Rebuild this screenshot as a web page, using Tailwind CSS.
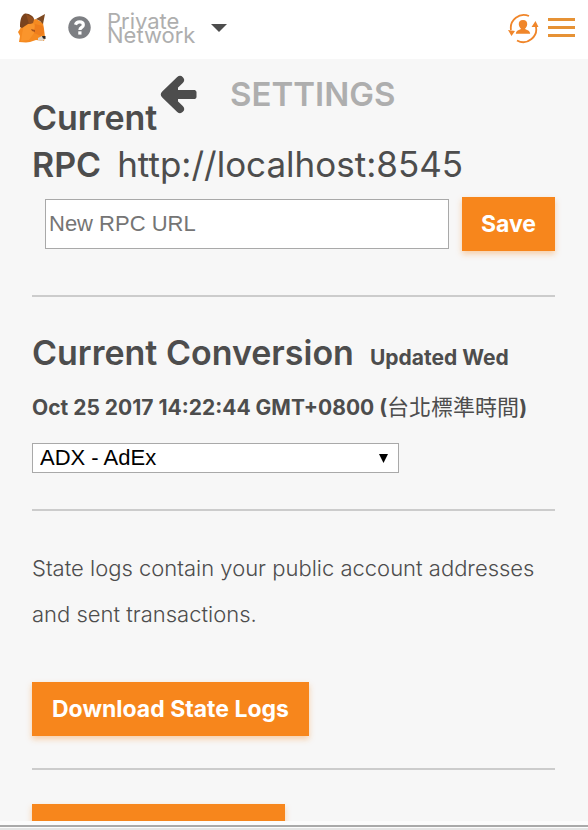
<!DOCTYPE html>
<html lang="en">
<head>
<meta charset="utf-8">
<meta name="viewport" content="width=device-width, initial-scale=1">
<title>Settings</title>
<script src="https://cdn.jsdelivr.net/npm/@tailwindcss/browser@4"></script>
</head>
<body class="flex h-screen flex-col overflow-hidden bg-[#f7f7f7] font-[Inter,'Noto_Sans_CJK_TC',sans-serif] text-[#4d4d4d]">
  <header class="flex h-[59px] shrink-0 items-center bg-white pr-[13px] pb-1 pl-4">
    <svg class="h-8 w-8" viewBox="0 0 32 32" role="img" aria-label="MetaMask">
      <path fill="#f58a20" d="M4 17 7 10l13-3 7 4 1 6 1 8-1 4-8-1-6 2-4 .5L3 30l1-6-2-4Z"/>
      <path fill="#fa952c" d="m8 13 9-2 3 4-2 6-5 7-8 1 1-7Z"/>
      <path fill="#ee7d1c" d="m19 12 8 2 1 7-3 3-7-3Z"/>
      <path fill="#7a431d" d="M4 15C4 9 5 3 9 1.500c4-.5 9 3 9 5.500l-1 4-5 1-6 4Z"/>
      <path fill="#94501f" d="m10 2 7 4v5l-4 1Z"/>
      <path fill="#7e4a22" d="m20 7 9-5-2 10-3-3Z"/>
      <path fill="#a9551c" d="m15 17 4 1v2l-3-1Z"/>
      <path fill="#ddd5cb" d="m22 26 4-2 3 2-2 3-5-1Z"/>
      <path fill="#292421" d="M26 24h3.500v3l-2.500-.5Z"/>
    </svg>
    <button type="button" aria-label="Help" class="ml-5">
      <svg class="size-[23px]" viewBox="0 0 24 24"><circle cx="12" cy="12" r="11.7" fill="#7d7f83"/><path fill="none" stroke="#fff" stroke-width="3.3" d="M7.8 9.2C8.5 7 10 6.1 12 6.1c2.300 0 4 1.200 4 3.200 0 2.600-3.600 2.500-3.600 5.200"/><path fill="#fff" d="M10.700 16h3.400v3.400h-3.400z"/></svg>
    </button>
    <button type="button" class="ml-4 flex items-center gap-4 text-left text-[#aeaeae]">
      <span class="text-[22px] leading-[14px]">Private<br>Network</span>
      <svg class="h-2 w-4" viewBox="0 0 16 8"><path fill="#4d4d4d" d="M0 0h16L8 8Z"/></svg>
    </button>
    <button type="button" aria-label="Switch account" class="ml-auto">
      <svg class="size-8" viewBox="0 0 32 32" fill="none" stroke="#f0862a" stroke-width="1.800">
        <path d="M22 4A13 13 0 0 0 4 18M10 28.500A13 13 0 0 0 28.500 13"/>
        <path fill="#f0862a" stroke="none" d="m1 18 7 1-3.500 5ZM24.500 15l4-6 3 6ZM16 8c3 0 4.500 2 4.200 4.500-.3 2-1.200 3.500-2.200 4.200 1 1.500 4.800 1 5.200 5.100H8.800c.4-4.100 4.200-3.600 5.200-5.100-1-.7-1.900-2.200-2.200-4.200C11.500 10 13 8 16 8Z"/>
      </svg>
    </button>
    <button type="button" aria-label="Menu" class="ml-[9px] flex w-[27px] flex-col gap-[5px]">
      <span class="h-[3px] w-full bg-[#e69235]"></span>
      <span class="h-[3px] w-full bg-[#e69235]"></span>
      <span class="h-[3px] w-full bg-[#e69235]"></span>
    </button>
  </header>

  <main class="min-h-0 flex-1 overflow-hidden px-8 pt-3">
    <div class="pr-px">
      <div class="float-right flex h-[46px] w-[395px] items-center gap-8">
        <button type="button" aria-label="Back">
          <svg class="h-[39px] w-[38px]" viewBox="0 0 38 39" fill="none" stroke="#4d4d4d" stroke-linecap="round" stroke-linejoin="round"><path stroke-width="8" d="M20 5 5 19.500 20 34"/><path stroke-width="9" stroke-linecap="butt" d="M8 19.500h27"/><path stroke-width="5" d="M34 17.500v4"/><path fill="#4d4d4d" stroke="none" d="M7 19.500 18 9v21Z"/></svg>
        </button>
        <h1 class="text-[33px] leading-none font-semibold text-[#aeaeae]">SETTINGS</h1>
      </div>
      <section class="pt-6">
        <p class="text-[34px] leading-[46px]"><strong class="mr-4 font-semibold">Current RPC</strong><span class="text-[35px]">http://localhost:8545</span></p>
        <form class="mt-[9px] flex items-center gap-[13px] pl-[13px]">
          <input type="text" aria-label="New RPC URL" placeholder="New RPC URL" class="h-[50px] min-w-0 flex-1 border border-[#a9a9a9] bg-white px-[3px] font-['Liberation_Sans',sans-serif] text-[22px] placeholder:text-[#757575]">
          <button type="button" class="h-[54px] bg-[#f7861c] px-[19px] text-[23px] font-bold text-white shadow-[0_3px_6px_rgba(247,134,28,0.36)]">Save</button>
        </form>
      </section>
      <hr class="mt-11 border-t-2 border-[#cccccc]">
      <section class="pt-8">
        <p class="pr-6 leading-[48px] font-semibold"><span class="mr-4 text-[34px]">Current Conversion</span><span class="text-[21px] font-bold">Updated Wed Oct 25 2017 14:22:44 GMT+0800 (<span class="text-[22px] font-normal">台北標準時間</span>)</span></p>
        <div class="relative mt-2.5 w-[367px]">
          <select aria-label="Current conversion" class="block h-[30px] w-full appearance-none border border-[#a9a9a9] bg-white pl-[7px] font-['Liberation_Sans',sans-serif] text-[22px] leading-[28px] text-black"><option>ADX - AdEx</option></select>
          <svg class="pointer-events-none absolute top-[11px] right-[11px] h-[9px] w-[9px]" viewBox="0 0 9 9"><path d="M0 0h9L4.500 9Z"/></svg>
        </div>
      </section>
      <hr class="mt-9 border-t-2 border-[#cccccc]">
      <section class="pt-[34px]">
        <p class="text-[22px] leading-[46px] font-light">State logs contain your public account addresses and sent transactions.</p>
        <button type="button" class="mt-[45px] block h-[54px] bg-[#f7861c] px-5 text-[23px] font-bold text-white shadow-[0_3px_6px_rgba(247,134,28,0.36)]">Download State Logs</button>
      </section>
      <hr class="mt-8 border-t-2 border-[#cccccc]">
      <button type="button" aria-label="Reveal Seed Words" class="mt-[34px] block h-[54px] w-[253px] bg-[#f7861c] shadow-[0_3px_6px_rgba(247,134,28,0.36)]"></button>
    </div>
  </main>
  <footer class="h-[9px] shrink-0 border-b-2 border-[#e4e4e4] bg-[#fcfcfc] pt-1"><div class="h-0.5 bg-[#aaaaaa]"></div></footer>
</body>
</html>
